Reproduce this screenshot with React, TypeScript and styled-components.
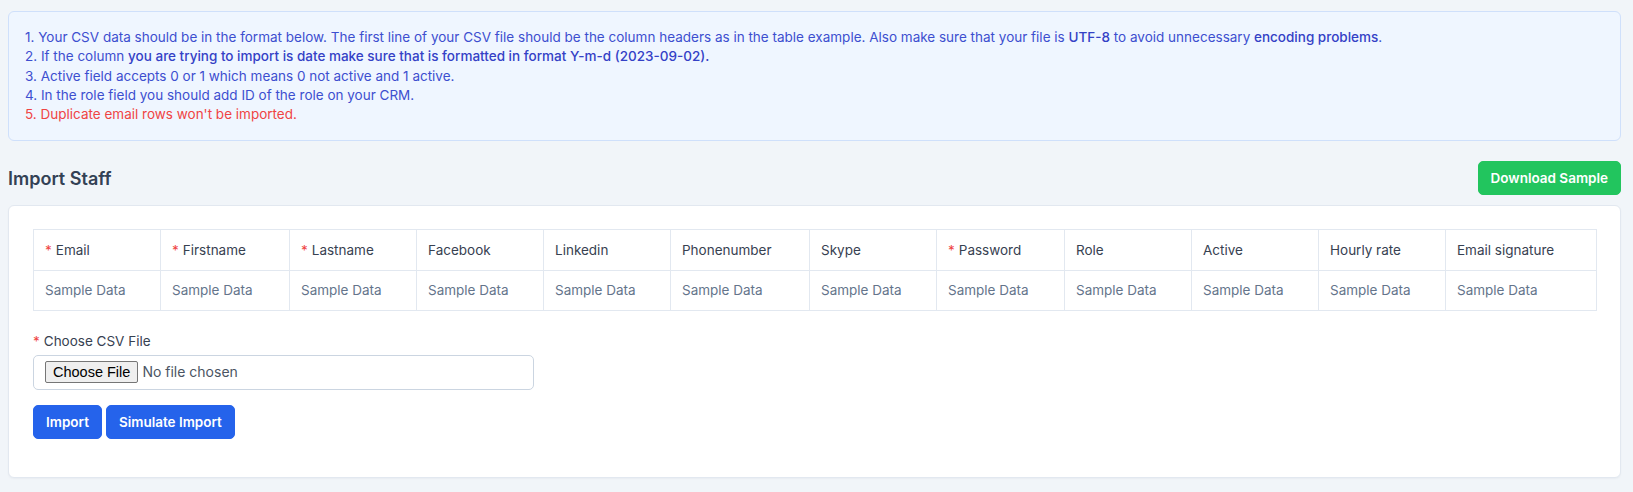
import React from "react";
import styled, { createGlobalStyle } from "styled-components";

const GlobalStyle = createGlobalStyle`
  html, body {
    margin: 0;
    padding: 0;
    background: #f1f5f9;
    font-family: Inter, "Noto Sans", sans-serif;
    color: #334155;
  }
  * { box-sizing: border-box; }
`;

const Page = styled.div`
  padding: 11px 12px 15px 8px;
`;

const Notice = styled.div`
  background: #eff6ff;
  border: 1px solid #cfe0fb;
  border-radius: 6px;
  padding: 16px;
  color: #3d4fcf;
  font-size: 13.5px;
  line-height: 19.3px;
`;

const NoticeLine = styled.div<{ $danger?: boolean }>`
  color: ${(p) => (p.$danger ? "#ef4444" : "inherit")};
`;

const Strong = styled.span`
  font-weight: 470;
  color: #3441c6;
`;

const HeaderRow = styled.div`
  display: flex;
  align-items: center;
  justify-content: space-between;
  margin: 20px 0 10px;
`;

const Title = styled.h4`
  margin: 0;
  font-size: 18px;
  font-weight: 600;
  color: #334155;
`;

const Button = styled.button<{ $variant: "success" | "primary" }>`
  font-family: Inter, "Noto Sans", sans-serif;
  font-size: 13.5px;
  font-weight: 600;
  color: #ffffff;
  background: ${(p) => (p.$variant === "success" ? "#22c55e" : "#2563eb")};
  border: 1px solid ${(p) => (p.$variant === "success" ? "#22c55e" : "#2563eb")};
  border-radius: 5px;
  height: 34px;
  padding: 0 12px;
  cursor: pointer;
`;

const Card = styled.div`
  background: #ffffff;
  border: 1px solid #e2e8f0;
  border-radius: 6px;
  box-shadow: 0 1px 2px rgba(15, 23, 42, 0.04);
  padding: 23px 25px 38px 24px;
`;

const Table = styled.table`
  width: 100%;
  border-collapse: collapse;
  table-layout: fixed;
  font-size: 13.5px;
`;

const HeadCell = styled.th<{ $w: number }>`
  width: ${(p) => p.$w}px;
  text-align: left;
  font-weight: 420;
  color: #374151;
  border: 1px solid #e2e8f0;
  padding: 10px 11px;
  line-height: 20px;
  white-space: nowrap;
`;

const BodyCell = styled.td`
  color: #64748b;
  border: 1px solid #e2e8f0;
  padding: 9px 11px 10px;
  line-height: 20px;
  white-space: nowrap;
`;

const Required = styled.span`
  color: #ef4444;
  margin-right: 4px;
`;

const FormGroup = styled.div`
  margin-top: 20px;
`;

const Label = styled.label`
  display: block;
  font-size: 13.5px;
  color: #374151;
  line-height: 20px;
  margin-bottom: 4px;
`;

const FileInput = styled.input`
  display: block;
  width: 501px;
  height: 35px;
  border: 1px solid #cbd5e1;
  border-radius: 5px;
  padding: 5px 11px;
  font-family: Inter, "Noto Sans", sans-serif;
  font-size: 14px;
  color: #4b5563;
  background: #ffffff;

  &::file-selector-button {
    font-family: "Liberation Sans", Arial, sans-serif;
    font-size: 14.5px;
    color: #000000;
    background: #efefef;
    border: 1px solid #767676;
    border-radius: 2px;
    padding: 1px 7px;
    margin-right: 4px;
    height: 22px;
  }
`;

const Actions = styled.div`
  display: flex;
  gap: 4px;
  margin-top: 15px;
`;

const columns: { label: string; width: number; required?: boolean }[] = [
  { label: "Email", width: 127, required: true },
  { label: "Firstname", width: 129, required: true },
  { label: "Lastname", width: 127, required: true },
  { label: "Facebook", width: 127 },
  { label: "Linkedin", width: 127 },
  { label: "Phonenumber", width: 139 },
  { label: "Skype", width: 127 },
  { label: "Password", width: 128, required: true },
  { label: "Role", width: 127 },
  { label: "Active", width: 127 },
  { label: "Hourly rate", width: 127 },
  { label: "Email signature", width: 151 },
];

export default function App() {
  return (
    <>
      <GlobalStyle />
      <Page>
        <Notice>
          <NoticeLine>
            1. Your CSV data should be in the format below. The first line of your CSV file should be
            the column headers as in the table example. Also make sure that your file is{" "}
            <Strong>UTF-8</Strong> to avoid unnecessary <Strong>encoding problems</Strong>.
          </NoticeLine>
          <NoticeLine>
            2. If the column{" "}
            <Strong>
              you are trying to import is date make sure that is formatted in format Y-m-d
              (2023-09-02).
            </Strong>
          </NoticeLine>
          <NoticeLine>3. Active field accepts 0 or 1 which means 0 not active and 1 active.</NoticeLine>
          <NoticeLine>4. In the role field you should add ID of the role on your CRM.</NoticeLine>
          <NoticeLine $danger>5. Duplicate email rows won't be imported.</NoticeLine>
        </Notice>

        <HeaderRow>
          <Title>Import Staff</Title>
          <Button $variant="success">Download Sample</Button>
        </HeaderRow>

        <Card>
          <Table>
            <thead>
              <tr>
                {columns.map((c) => (
                  <HeadCell key={c.label} $w={c.width}>
                    {c.required && <Required>*</Required>}
                    {c.label}
                  </HeadCell>
                ))}
              </tr>
            </thead>
            <tbody>
              <tr>
                {columns.map((c) => (
                  <BodyCell key={c.label}>Sample Data</BodyCell>
                ))}
              </tr>
            </tbody>
          </Table>

          <FormGroup>
            <Label htmlFor="file_csv">
              <Required>*</Required>Choose CSV File
            </Label>
            <FileInput id="file_csv" type="file" accept=".csv" />
          </FormGroup>

          <Actions>
            <Button $variant="primary">Import</Button>
            <Button $variant="primary">Simulate Import</Button>
          </Actions>
        </Card>
      </Page>
    </>
  );
}
